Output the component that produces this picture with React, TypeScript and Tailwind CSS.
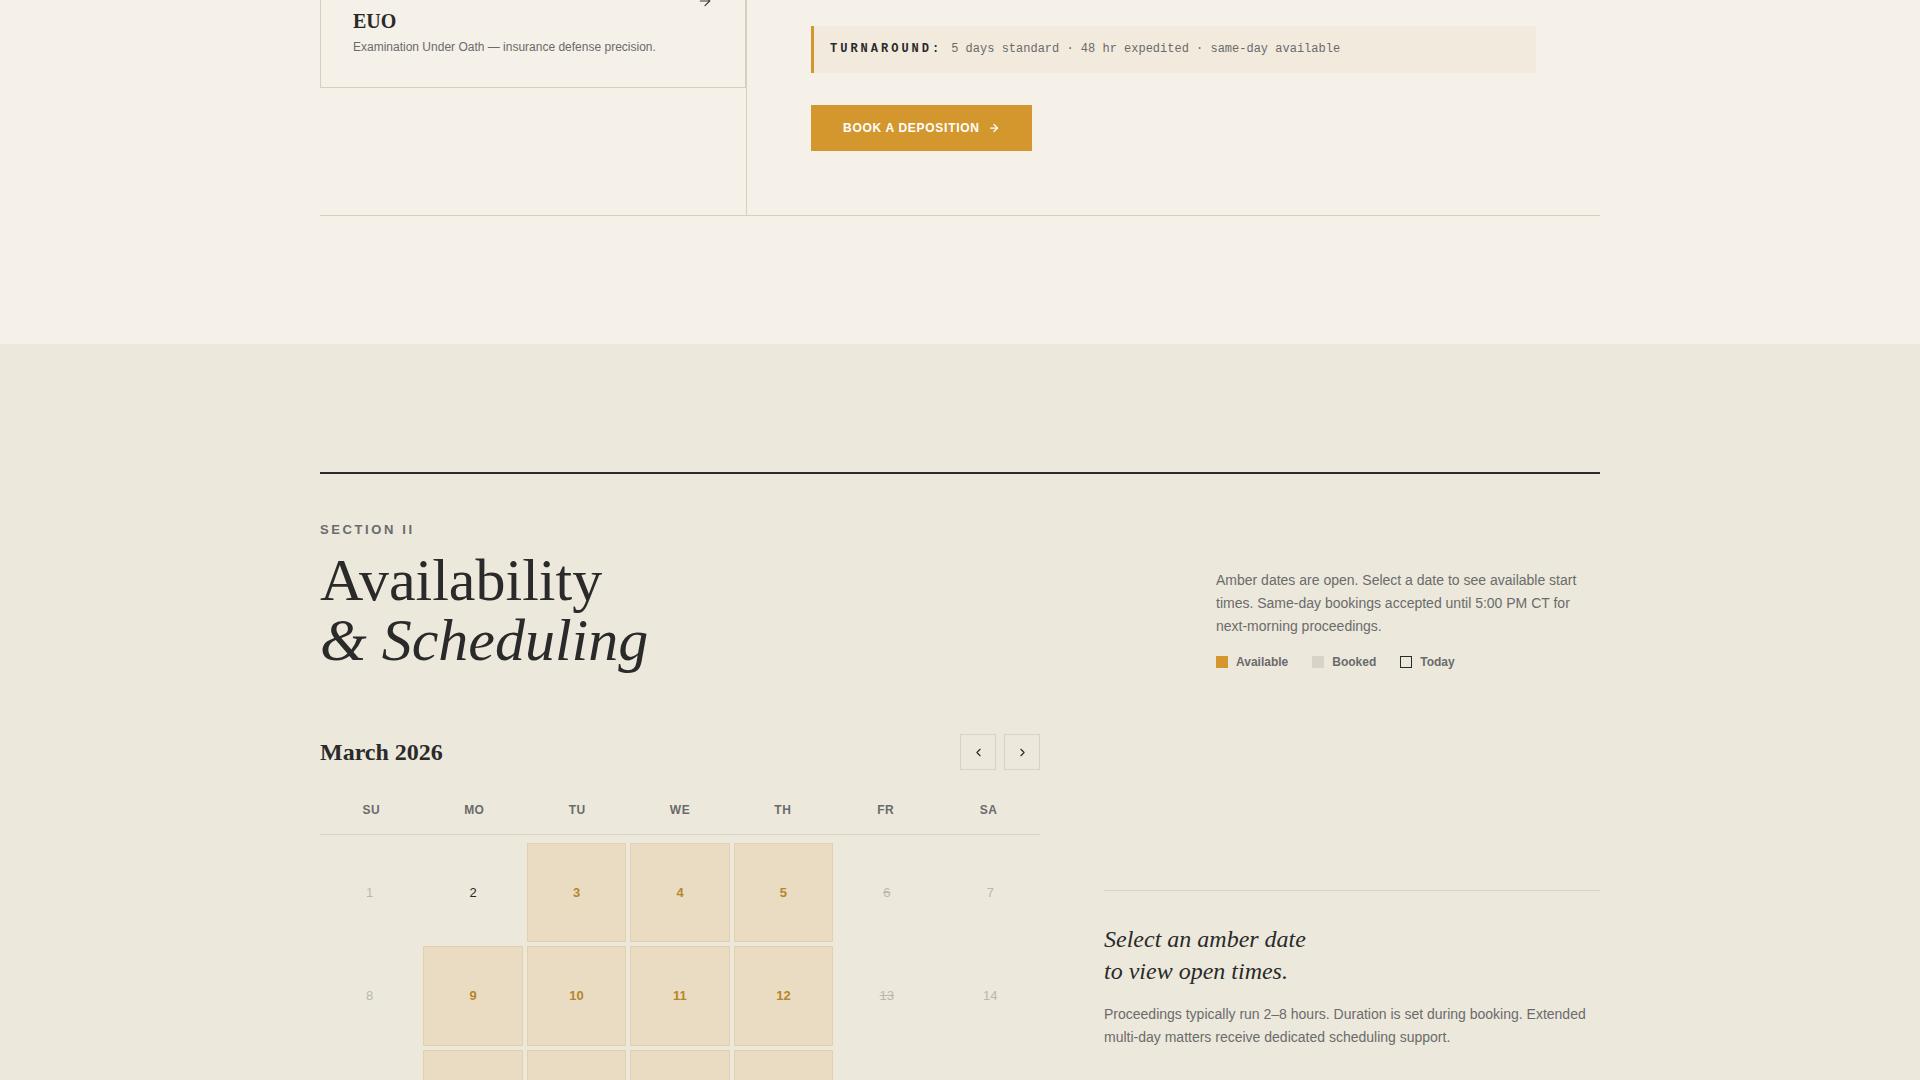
import React from "react";
import { ArrowRight, ChevronLeft, ChevronRight } from "lucide-react";

const serif = "font-['Liberation_Serif','Times_New_Roman',serif]";
const mono = "font-['Liberation_Mono','Courier_New',monospace]";

type Day = { n: number; kind: "avail" | "off" | "booked" | "today" };

function buildDays(): Day[] {
  const days: Day[] = [];
  for (let d = 1; d <= 31; d++) {
    const dow = (d - 1) % 7; // March 1 2026 is Sunday
    let kind: Day["kind"] = "off";
    if (d === 1) kind = "off";
    else if (d === 2) kind = "today";
    else if (dow === 5) kind = "booked";
    else if (dow === 0 || dow === 6) kind = "off";
    else kind = "avail";
    days.push({ n: d, kind });
  }
  return days;
}

function DayCell({ day }: { day: Day }) {
  if (day.kind === "avail") {
    return (
      <div className="aspect-square flex items-center justify-center border border-[#e4d1ab] bg-[#e9dcc3] text-[13px] font-bold text-[#b8862a]">
        {day.n}
      </div>
    );
  }
  if (day.kind === "today") {
    return (
      <div className="aspect-square flex items-center justify-center text-[13px] text-[#2a2a2a]">
        {day.n}
      </div>
    );
  }
  if (day.kind === "booked") {
    return (
      <div className="aspect-square flex items-center justify-center text-[13px] text-[#bdb7ab] line-through">
        {day.n}
      </div>
    );
  }
  return (
    <div className="aspect-square flex items-center justify-center text-[13px] text-[#bdb7ab]">
      {day.n}
    </div>
  );
}

export default function App() {
  const days = buildDays();
  const weekdays = ["SU", "MO", "TU", "WE", "TH", "FR", "SA"];
  return (
    <div className="min-h-screen bg-[#ece8dc] font-['Liberation_Sans',Arial,sans-serif] text-[#2a2a2a]">
      {/* Top section (services) */}
      <section className="bg-[#f5f0e8] pb-32">
        <div className="mx-auto grid max-w-[1280px] grid-cols-[427px_1fr] border-b border-[#d6d0c4]">
          <div className="border-r border-[#d6d0c4]">
            <div className="relative border-x border-b border-[#d6d0c4] px-8 pb-[30px] pt-[7px]">
              <ArrowRight
                size={16}
                strokeWidth={1.75}
                className="absolute right-8 top-[-7px] text-[#3a3a3a]"
              />
              <h3 className={`${serif} text-[20px] font-bold leading-7 text-[#2a2a2a]`}>EUO</h3>
              <p className="mt-[2px] text-[12px] leading-5 text-[#6b6b6b]">
                Examination Under Oath — insurance defense precision.
              </p>
            </div>
          </div>
          <div className="px-16 pb-16 pt-[26px]">
            <div
              className={`${mono} border-l-[3px] border-[#d4972e] bg-[#f1eadd] py-4 pl-4 text-[12px] leading-[15px] text-[#6b6b6b]`}
            >
              <span className="font-bold tracking-[0.25em] text-[#2a2a2a]">TURNAROUND:</span>
              <span className="ml-[9px]">5 days standard · 48 hr expedited · same-day available</span>
            </div>
            <button className="mt-8 flex h-[46px] items-center bg-[#d4972e] px-8 text-[12px] font-bold tracking-[0.06em] text-white">
              BOOK A DEPOSITION
              <ArrowRight size={12} strokeWidth={2.5} className="ml-2" />
            </button>
          </div>
        </div>
      </section>

      {/* Section II */}
      <section className="bg-[#ece8dc] pt-32 pb-32">
        <div className="mx-auto max-w-[1280px]">
          <div className="flex items-end justify-between border-t-2 border-[#2a2a2a] pt-12">
            <div>
              <p className="mb-3 text-[13px] font-bold leading-4 tracking-[0.2em] text-[#6b6b6b]">
                SECTION II
              </p>
              <h2 className={`${serif} text-[60px] font-normal leading-[60px] text-[#2a2a2a]`}>
                Availability
                <br />
                <em>&amp; Scheduling</em>
              </h2>
            </div>
            <div className="w-[384px]">
              <p className="mb-4 text-[14px] leading-[23px] text-[#6b6b6b]">
                Amber dates are open. Select a date to see available start times. Same-day
                bookings accepted until 5:00 PM CT for next-morning proceedings.
              </p>
              <div className="flex items-center gap-6 text-[12px] font-bold leading-4 text-[#6b6b6b]">
                <span className="flex items-center gap-2">
                  <span className="h-3 w-3 bg-[#d4972e]" />
                  Available
                </span>
                <span className="flex items-center gap-2">
                  <span className="h-3 w-3 bg-[#d8d2c8]" />
                  Booked
                </span>
                <span className="flex items-center gap-2">
                  <span className="h-3 w-3 border border-[#2a2a2a]" />
                  Today
                </span>
              </div>
            </div>
          </div>

          <div className="mt-16 grid grid-cols-[720px_1fr] gap-16">
            <div>
              <div className="mb-6 flex h-9 items-center justify-between">
                <h3 className={`${serif} text-[24px] font-bold text-[#2a2a2a]`}>March 2026</h3>
                <div className="flex gap-2">
                  <button className="flex h-9 w-9 items-center justify-center border border-[#d9d3c6] text-[#2a2a2a]">
                    <ChevronLeft size={13} strokeWidth={2} />
                  </button>
                  <button className="flex h-9 w-9 items-center justify-center border border-[#d9d3c6] text-[#2a2a2a]">
                    <ChevronRight size={13} strokeWidth={2} />
                  </button>
                </div>
              </div>
              <div className="grid grid-cols-7 border-b border-[#d9d3c6] pb-4 pt-2 text-center text-[12px] font-bold leading-4 tracking-[0.04em] text-[#6b6b6b]">
                {weekdays.map((w) => (
                  <div key={w}>{w}</div>
                ))}
              </div>
              <div className="mt-2 grid grid-cols-7 gap-1">
                {days.map((d) => (
                  <DayCell key={d.n} day={d} />
                ))}
              </div>
            </div>

            <div className="pt-[156px]">
              <div className="border-t border-[#d9d3c6] pt-8">
                <h3 className={`${serif} text-[24px] italic leading-8 text-[#2a2a2a]`}>
                  Select an amber date
                  <br />
                  to view open times.
                </h3>
                <p className="mt-4 text-[14px] leading-[23px] text-[#6b6b6b]">
                  Proceedings typically run 2–8 hours. Duration is set during booking. Extended
                  multi-day matters receive dedicated scheduling support.
                </p>
              </div>
            </div>
          </div>
        </div>
      </section>
    </div>
  );
}
